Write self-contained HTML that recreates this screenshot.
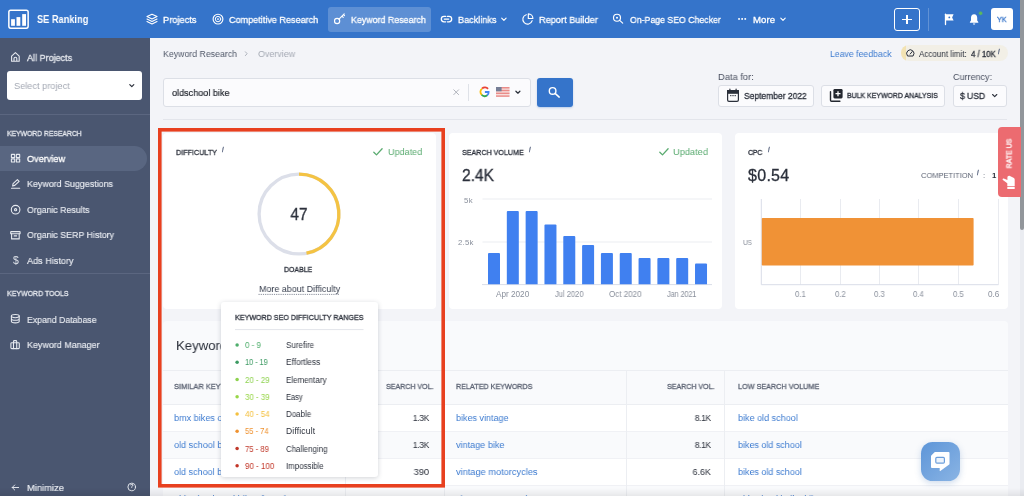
<!DOCTYPE html>
<html lang="en"><head><meta charset="utf-8"><title>SE Ranking – Keyword Research Overview</title>
<style>
*{box-sizing:border-box;margin:0;padding:0}
html,body{width:1024px;height:496px;overflow:hidden;background:#f3f4f8;font-family:"Liberation Sans",sans-serif}
body{position:relative}
.a{position:absolute}
.t{position:absolute;white-space:pre;font-family:"Liberation Sans",sans-serif;will-change:transform}
svg{position:absolute;overflow:visible}
.box{position:absolute;background:#fbfbfd;border:1px solid #dcdfe6;border-radius:3px}
.card{position:absolute;background:#fff;border-radius:4px}
.row{position:absolute;left:163px;width:844.5px}
.vl{position:absolute;width:1px;background:#eceef2;top:370px;height:126px}
</style></head><body>

<!-- top bar -->
<div class="a" style="left:0;top:0;width:1020.25px;height:38px;background:#3574ca"></div>
<div class="a" style="left:327.5px;top:6.5px;width:103.5px;height:25.5px;background:rgba(255,255,255,.2);border-radius:3px"></div>
<!-- logo -->
<svg width="40" height="40" viewBox="0 0 40 40" style="left:0;top:0"><rect x="8.85" y="10.25" width="19.3" height="17.9" rx="1.8" fill="none" stroke="#fff" stroke-width="1.5"/><rect x="11.1" y="19.2" width="3.8" height="6.6" fill="#fff"/><rect x="16.5" y="17.1" width="3.8" height="8.7" fill="#fff"/><rect x="22.2" y="14.1" width="3.8" height="11.7" fill="#fff"/></svg>
<!-- plus button, separator, avatar -->
<div class="a" style="left:894px;top:8px;width:26px;height:22.5px;border:1px solid #fff;border-radius:3px"></div>
<div class="a" style="left:902.3px;top:18.5px;width:9.4px;height:1.4px;background:#fff"></div>
<div class="a" style="left:906.3px;top:14.5px;width:1.4px;height:9.4px;background:#fff"></div>
<div class="a" style="left:927.7px;top:8px;width:1px;height:22.5px;background:rgba(255,255,255,.22)"></div>
<div class="a" style="left:991px;top:8px;width:21.5px;height:22px;background:#fff;border-radius:3px"></div>

<!-- scrollbar -->
<div class="a" style="left:1020.25px;top:0;width:3.75px;height:496px;background:#eaecf1"></div>
<div class="a" style="left:1020.25px;top:0;width:3.75px;height:230px;background:#92969b;border-radius:0 0 2px 2px"></div>

<!-- sidebar -->
<div class="a" style="left:0;top:38px;width:150px;height:458px;background:#4a5670"></div>
<div class="a" style="left:7px;top:70.5px;width:135px;height:29.5px;background:#fff;border-radius:3px"></div>
<div class="a" style="left:0;top:113.5px;width:150px;height:1px;background:#5b6680"></div>
<div class="a" style="left:0;top:145.5px;width:146.5px;height:25.5px;background:#596681;border-radius:0 13px 13px 0"></div>
<div class="a" style="left:0;top:273px;width:150px;height:1px;background:#5b6680"></div>

<!-- search row -->
<div class="box" style="left:163px;top:78px;width:367.5px;height:28.5px"></div>
<div class="a" style="left:468.2px;top:83.5px;width:1px;height:17px;background:#dfe2e8"></div>
<div class="a" style="left:537px;top:77.5px;width:35.5px;height:29.5px;background:#3574ca;border-radius:3px;box-shadow:0 1px 2px rgba(53,116,202,.3)"></div>
<div class="box" style="left:718px;top:84.5px;width:96px;height:22px"></div>
<div class="box" style="left:821px;top:84.5px;width:124px;height:22px"></div>
<div class="box" style="left:952.5px;top:84.5px;width:54.5px;height:22px"></div>
<div class="a" style="left:901px;top:45px;width:106.5px;height:16px;background:#f2efe6;border-radius:8px;overflow:hidden"><div class="a" style="left:0;top:0;width:5px;height:16px;background:#f3e3b3"></div></div>
<div class="a" style="left:163px;top:119px;width:844px;height:1px;background:#e3e5eb"></div>

<!-- cards -->
<div class="card" style="left:163px;top:133px;width:273px;height:175.75px"></div>
<div class="card" style="left:449px;top:133px;width:272.5px;height:175.75px"></div>
<div class="card" style="left:734.5px;top:133px;width:273px;height:175.75px"></div>

<!-- ideas card + table -->
<div class="card" style="left:163px;top:321px;width:844.5px;height:180px;background:#f9fafc"></div>
<div class="row" style="top:369.5px;height:1px;background:#eceef2"></div>
<div class="row" style="top:404px;height:27.25px;background:#fff"></div>
<div class="row" style="top:458.25px;height:27.25px;background:#fff"></div>
<div class="row" style="top:403.5px;height:1px;background:#eceef2"></div>
<div class="row" style="top:431px;height:1px;background:#f0f1f5"></div>
<div class="row" style="top:458px;height:1px;background:#f0f1f5"></div>
<div class="row" style="top:485.2px;height:1px;background:#f0f1f5"></div>
<div class="vl" style="left:345px"></div>
<div class="vl" style="left:443.5px"></div>
<div class="vl" style="left:626.3px"></div>
<div class="vl" style="left:724.3px"></div>

<svg width="1024" height="496" viewBox="0 0 1024 496" style="left:0;top:0" fill="none">
<circle cx="299" cy="214" r="39.9" stroke="#dcdfe9" stroke-width="3.3"/>
<path d="M299 174.1A39.9 39.9 0 0 1 306.48 253.19" stroke="#f4c343" stroke-width="3.3"/>
<line x1="258.5" y1="294.4" x2="339.8" y2="294.4" stroke="#6b7282" stroke-width="0.8" stroke-dasharray="1.2 1"/>
<line x1="482.5" y1="199" x2="712" y2="199" stroke="#e6e8ee" stroke-width="0.8"/>
<line x1="482.5" y1="242" x2="712" y2="242" stroke="#e6e8ee" stroke-width="0.8"/>
<line x1="482" y1="284.6" x2="712" y2="284.6" stroke="#d9dde8" stroke-width="1"/>
<path d="M488.00 284.2V254q0 -1 1 -1h10q1 0 1 1V284.2z" fill="#4080f0"/>
<path d="M506.82 284.2V212q0 -1 1 -1h10q1 0 1 1V284.2z" fill="#4080f0"/>
<path d="M525.64 284.2V212q0 -1 1 -1h10q1 0 1 1V284.2z" fill="#4080f0"/>
<path d="M544.46 284.2V225.5q0 -1 1 -1h10q1 0 1 1V284.2z" fill="#4080f0"/>
<path d="M563.28 284.2V237q0 -1 1 -1h10q1 0 1 1V284.2z" fill="#4080f0"/>
<path d="M582.10 284.2V246q0 -1 1 -1h10q1 0 1 1V284.2z" fill="#4080f0"/>
<path d="M600.92 284.2V254q0 -1 1 -1h10q1 0 1 1V284.2z" fill="#4080f0"/>
<path d="M619.74 284.2V254q0 -1 1 -1h10q1 0 1 1V284.2z" fill="#4080f0"/>
<path d="M638.56 284.2V259q0 -1 1 -1h10q1 0 1 1V284.2z" fill="#4080f0"/>
<path d="M657.38 284.2V259q0 -1 1 -1h10q1 0 1 1V284.2z" fill="#4080f0"/>
<path d="M676.20 284.2V259q0 -1 1 -1h10q1 0 1 1V284.2z" fill="#4080f0"/>
<path d="M695.02 284.2V264.5q0 -1 1 -1h10q1 0 1 1V284.2z" fill="#4080f0"/>
<line x1="800.5" y1="199" x2="800.5" y2="284.7" stroke="#e9ebf0" stroke-width="1"/>
<line x1="840.5" y1="199" x2="840.5" y2="284.7" stroke="#e9ebf0" stroke-width="1"/>
<line x1="879.5" y1="199" x2="879.5" y2="284.7" stroke="#e9ebf0" stroke-width="1"/>
<line x1="918.5" y1="199" x2="918.5" y2="284.7" stroke="#e9ebf0" stroke-width="1"/>
<line x1="958.5" y1="199" x2="958.5" y2="284.7" stroke="#e9ebf0" stroke-width="1"/>
<line x1="998.5" y1="199" x2="998.5" y2="284.7" stroke="#e9ebf0" stroke-width="1"/>
<line x1="761.3" y1="199" x2="761.3" y2="284.7" stroke="#d9dde8" stroke-width="1"/>
<line x1="761.3" y1="284.7" x2="998.5" y2="284.7" stroke="#d9dde8" stroke-width="1"/>
<rect x="761.8" y="218" width="211.8" height="47.5" rx="0.8" fill="#f09236"/>
<path d="M373.8 152.2l2.7 2.7l5.6 -6.2" stroke="#5aab70" stroke-width="1.3" stroke-linecap="round" stroke-linejoin="round"/>
<path d="M659.8 152.2l2.7 2.7l5.6 -6.2" stroke="#5aab70" stroke-width="1.3" stroke-linecap="round" stroke-linejoin="round"/>
<g stroke="#fff" stroke-width="1.15" stroke-linecap="round" stroke-linejoin="round" fill="none">
<!-- layers (Projects) -->
<path d="M152 14.3l5 2.3l-5 2.3l-5 -2.3z"/>
<path d="M147 19.1l5 2.3l5 -2.3"/>
<path d="M147 21.6l5 2.3l5 -2.3"/>
<!-- target (Competitive) -->
<circle cx="218" cy="19.1" r="4.9"/><circle cx="218" cy="19.1" r="2.7" stroke-width="1"/><circle cx="218" cy="19.1" r="0.9" fill="#fff" stroke="none"/>
<!-- key -->
<circle cx="337.1" cy="21" r="2.6"/><path d="M339 19.1l5.2 -5.2M342 16.2l1.2 1.2M343.5 14.7l1 1"/>
<!-- link -->
<path d="M445.6 16.4h-1.6a2.7 2.7 0 0 0 0 5.4h1.6M447.4 16.4h1.6a2.7 2.7 0 0 1 0 5.4h-1.6M444.3 19.1h4.4" stroke-width="1.3"/>
<!-- chevrons -->
<path d="M501.7 18.2l2.2 2.2l2.2 -2.2"/>
<path d="M780.8 18.2l2.2 2.2l2.2 -2.2"/>
<!-- pie (Report Builder) -->
<path d="M526.2 14.7a4.8 4.8 0 1 0 6 6"/><path d="M528.3 13.9v4.6h4.6a4.6 4.6 0 0 0 -4.6 -4.6z"/>
<!-- on-page magnifier -->
<circle cx="617" cy="17.7" r="3.5"/><circle cx="617" cy="17.7" r="1" fill="#fff" stroke="none"/><path d="M619.7 20.4l3 2.7"/>
<!-- flag -->
<path d="M945.5 14.2v10.4" stroke-width="1.3"/>
</g>
<path d="M946 14.2h7.6l-1.5 3.2l1.5 3.2h-7.6z" fill="#fff"/><circle cx="949.3" cy="17.4" r="0.9" fill="#3574ca"/>
<!-- more dots -->
<rect x="738.2" y="18.1" width="1.7" height="1.7" fill="#fff"/><rect x="741.3" y="18.1" width="1.7" height="1.7" fill="#fff"/><rect x="744.4" y="18.1" width="1.7" height="1.7" fill="#fff"/>
<!-- bell -->
<path d="M974.1 14.2c-2.1 0 -3.1 1.6 -3.1 3.6v2.6l-1.1 1.7v0.6h8.4v-0.6l-1.1 -1.7v-2.6c0 -2 -1 -3.6 -3.1 -3.6zM972.9 23.4a1.2 1.2 0 0 0 2.4 0z" fill="#fff"/>
<circle cx="980.6" cy="13.3" r="2" fill="#5cb85c" stroke="#3574ca" stroke-width="0.5"/>

<!-- sidebar icons -->
<g stroke="#e6e9ef" stroke-width="1.1" stroke-linecap="round" stroke-linejoin="round" fill="none">
<path d="M11.6 56.2l3.8 -3.5l3.8 3.5v5h-7.6zM14 61.2v-2.6a1.4 1.4 0 0 1 2.8 0v2.6"/>
<rect x="11.4" y="154.4" width="3.3" height="3.1" rx="0.3"/><rect x="16.4" y="154.4" width="3.3" height="3.1" rx="0.3"/><rect x="11.4" y="158.9" width="3.3" height="3.1" rx="0.3"/><rect x="16.4" y="158.9" width="3.3" height="3.1" rx="0.3"/>
<path d="M12.6 186l0.5 -2.3l4.3 -4.1l1.7 1.7l-4.3 4.1zM11.5 188.3h8.2"/>
<circle cx="15.6" cy="209.7" r="4.3"/><circle cx="15.6" cy="209.7" r="1.1"/>
<rect x="10.7" y="231.6" width="9.4" height="2.2" rx="0.4"/><path d="M11.6 233.9v5h7.6v-5M14.2 235.9h2.4"/>
<ellipse cx="15.3" cy="316.1" rx="3.9" ry="1.6"/><path d="M11.4 316.1v5.2c0 0.9 1.7 1.6 3.9 1.6s3.9 -0.7 3.9 -1.6v-5.2M11.4 318.7c0 0.9 1.7 1.6 3.9 1.6s3.9 -0.7 3.9 -1.6"/>
<rect x="10.9" y="342.8" width="8.4" height="5.8" rx="0.8"/><path d="M13.5 342.8v-1.3a0.9 0.9 0 0 1 0.9 -0.9h1.4a0.9 0.9 0 0 1 0.9 0.9v1.3M13.5 342.8v5.8M16.7 342.8v5.8"/>
<path d="M18.6 487.5h-6.4M14.7 485l-2.5 2.5l2.5 2.5" stroke-width="0.95"/>
<circle cx="131.7" cy="487" r="3.8" stroke-width="0.95"/>
</g>
<!-- select chevron -->
<path d="M129.8 84.6l2 2l2 -2" stroke="#2b303b" stroke-width="1.2" stroke-linecap="round" stroke-linejoin="round"/>
<!-- breadcrumb chevron -->
<path d="M245.4 51.8l1.7 1.9l-1.7 1.9" stroke="#a5aab4" stroke-width="0.9" stroke-linecap="round" stroke-linejoin="round"/>

<!-- search input icons -->
<path d="M453.8 89.8l4.8 4.8M458.6 89.8l-4.8 4.8" stroke="#a3a7b0" stroke-width="0.85" stroke-linecap="round"/>
<!-- google G -->
<g fill="none" stroke-width="1.8">
<path d="M488 88.9a3.9 3.9 0 0 0 -5.9 -0.4" stroke="#ea4335"/>
<path d="M482 88.7a3.9 3.9 0 0 0 -0.1 6.2" stroke="#fbbc05"/>
<path d="M481.7 94.7a3.9 3.9 0 0 0 5.8 0.5" stroke="#34a853"/>
<path d="M487.2 95.4a4 4 0 0 0 1.4 -3.4h-3.7" stroke="#4285f4"/>
</g>
<!-- us flag -->
<g>
<rect x="496" y="87" width="13.5" height="9.8" rx="1" fill="#f7dedc"/>
<rect x="496" y="87" width="13.5" height="1.5" fill="#ea8c89"/><rect x="496" y="89.8" width="13.5" height="1.4" fill="#ea8c89"/><rect x="496" y="92.6" width="13.5" height="1.4" fill="#ea8c89"/><rect x="496" y="95.4" width="13.5" height="1.4" fill="#ea8c89"/>
<rect x="496" y="87" width="5.6" height="4.3" fill="#767e96"/>
</g>
<path d="M515.9 91.2l2 2l2 -2" stroke="#2b303b" stroke-width="1.25" stroke-linecap="round" stroke-linejoin="round"/>
<!-- search button magnifier -->
<circle cx="552.6" cy="90.9" r="3.3" stroke="#fff" stroke-width="1.4"/><path d="M555.1 93.4l4.1 3.7" stroke="#fff" stroke-width="1.5" stroke-linecap="round"/>
<!-- calendar -->
<rect x="727.6" y="90.6" width="10.8" height="10.8" rx="1.4" stroke="#2b303b" stroke-width="1.2"/>
<path d="M727.6 90.6h10.8v2.6h-10.8zM729.9 89v2.6M736.1 89v2.6" stroke="#2b303b" stroke-width="1.2" fill="#2b303b" stroke-linecap="round"/>
<rect x="730.2" y="95" width="1.2" height="1.2" fill="#2b303b"/><rect x="732.4" y="95" width="1.2" height="1.2" fill="#2b303b"/><rect x="734.6" y="95" width="1.2" height="1.2" fill="#2b303b"/>
<!-- bulk icon -->
<rect x="833.4" y="89" width="9.2" height="9.4" rx="1.3" fill="#23272f"/>
<path d="M838 91.2v5M835.5 93.7h5" stroke="#fff" stroke-width="1.3"/>
<path d="M830.5 91.8v8.4a1 1 0 0 0 1 1h8.4" stroke="#23272f" stroke-width="1.4" stroke-linecap="round"/>
<!-- usd chevron -->
<path d="M992.6 94.5l2.1 2.1l2.1 -2.1" stroke="#2b303b" stroke-width="1.1" stroke-linecap="round" stroke-linejoin="round"/>
<!-- account limit gauge -->
<path d="M907.3 55.7a3.7 3.7 0 1 1 6 0zM910.2 54l2 -2.4" stroke="#2b303b" stroke-width="1" stroke-linecap="round" stroke-linejoin="round"/>

</svg>

<span class="t" style="top:12.60px;font-size:10.2px;line-height:14px;color:#ffffff;font-weight:700;left:37.00px;transform:scaleX(0.9053);transform-origin:0 50%;">SE Ranking</span>
<span class="t" style="top:12.50px;font-size:9.6px;line-height:14px;color:#ffffff;left:163.00px;transform:scaleX(0.9666);transform-origin:0 50%;-webkit-text-stroke:0.3px #ffffff;">Projects</span>
<span class="t" style="top:12.50px;font-size:9.6px;line-height:14px;color:#ffffff;left:228.75px;transform:scaleX(0.9455);transform-origin:0 50%;-webkit-text-stroke:0.3px #ffffff;">Competitive Research</span>
<span class="t" style="top:12.50px;font-size:9.6px;line-height:14px;color:#ffffff;left:350.50px;transform:scaleX(0.9221);transform-origin:0 50%;-webkit-text-stroke:0.3px #ffffff;">Keyword Research</span>
<span class="t" style="top:12.50px;font-size:9.6px;line-height:14px;color:#ffffff;left:457.50px;transform:scaleX(0.9499);transform-origin:0 50%;-webkit-text-stroke:0.3px #ffffff;">Backlinks</span>
<span class="t" style="top:12.50px;font-size:9.6px;line-height:14px;color:#ffffff;left:538.75px;transform:scaleX(0.9580);transform-origin:0 50%;-webkit-text-stroke:0.3px #ffffff;">Report Builder</span>
<span class="t" style="top:12.50px;font-size:9.6px;line-height:14px;color:#ffffff;left:630.00px;transform:scaleX(0.9101);transform-origin:0 50%;-webkit-text-stroke:0.3px #ffffff;">On-Page SEO Checker</span>
<span class="t" style="top:12.50px;font-size:9.6px;line-height:14px;color:#ffffff;letter-spacing:0.098px;left:753.25px;-webkit-text-stroke:0.3px #ffffff;">More</span>
<span class="t" style="top:14.20px;font-size:7.8px;line-height:11px;color:#3574ca;left:997.30px;transform:scaleX(0.9129);transform-origin:0 50%;-webkit-text-stroke:0.3px #3574ca;">YK</span>
<span class="t" style="top:51.10px;font-size:9.5px;line-height:13px;color:#e6e9ef;left:27.20px;transform:scaleX(0.9513);transform-origin:0 50%;-webkit-text-stroke:0.3px #e6e9ef;">All Projects</span>
<span class="t" style="top:78.50px;font-size:9.6px;line-height:14px;color:#a3a8b3;left:13.50px;transform:scaleX(0.9591);transform-origin:0 50%;">Select project</span>
<span class="t" style="top:127.70px;font-size:7.7px;line-height:11px;color:#e6e9ef;letter-spacing:-0.113px;left:7.00px;transform:scaleX(0.9000);transform-origin:0 50%;-webkit-text-stroke:0.3px #e6e9ef;">KEYWORD RESEARCH</span>
<span class="t" style="top:151.50px;font-size:9.7px;line-height:14px;color:#ffffff;left:27.00px;transform:scaleX(0.9412);transform-origin:0 50%;-webkit-text-stroke:0.3px #ffffff;">Overview</span>
<span class="t" style="top:177.00px;font-size:9.7px;line-height:14px;color:#e6e9ef;left:27.00px;transform:scaleX(0.9178);transform-origin:0 50%;-webkit-text-stroke:0.18px #e6e9ef;">Keyword Suggestions</span>
<span class="t" style="top:202.75px;font-size:9.7px;line-height:14px;color:#e6e9ef;left:27.00px;transform:scaleX(0.9068);transform-origin:0 50%;-webkit-text-stroke:0.18px #e6e9ef;">Organic Results</span>
<span class="t" style="top:228.00px;font-size:9.7px;line-height:14px;color:#e6e9ef;left:27.00px;transform:scaleX(0.9095);transform-origin:0 50%;-webkit-text-stroke:0.18px #e6e9ef;">Organic SERP History</span>
<span class="t" style="top:253.50px;font-size:9.7px;line-height:14px;color:#e6e9ef;left:27.00px;transform:scaleX(0.9388);transform-origin:0 50%;-webkit-text-stroke:0.18px #e6e9ef;">Ads History</span>
<span class="t" style="top:288.00px;font-size:7.7px;line-height:11px;color:#e6e9ef;left:7.00px;transform:scaleX(0.9092);transform-origin:0 50%;-webkit-text-stroke:0.3px #e6e9ef;">KEYWORD TOOLS</span>
<span class="t" style="top:312.50px;font-size:9.7px;line-height:14px;color:#e6e9ef;left:27.00px;transform:scaleX(0.9022);transform-origin:0 50%;-webkit-text-stroke:0.18px #e6e9ef;">Expand Database</span>
<span class="t" style="top:337.75px;font-size:9.7px;line-height:14px;color:#e6e9ef;left:27.00px;transform:scaleX(0.9221);transform-origin:0 50%;-webkit-text-stroke:0.18px #e6e9ef;">Keyword Manager</span>
<span class="t" style="top:480.75px;font-size:9.7px;line-height:14px;color:#e6e9ef;left:27.00px;transform:scaleX(0.9681);transform-origin:0 50%;-webkit-text-stroke:0.18px #e6e9ef;">Minimize</span>
<span class="t" style="top:46.75px;font-size:9.6px;line-height:14px;color:#505869;left:163.00px;transform:scaleX(0.9129);transform-origin:0 50%;">Keyword Research</span>
<span class="t" style="top:46.75px;font-size:9.6px;line-height:14px;color:#a5aab4;left:258.00px;transform:scaleX(0.9316);transform-origin:0 50%;">Overview</span>
<span class="t" style="top:47.00px;font-size:9.6px;line-height:14px;color:#3d7bd0;left:829.50px;transform:scaleX(0.9077);transform-origin:0 50%;">Leave feedback</span>
<span class="t" style="top:47.80px;font-size:8.4px;line-height:12px;color:#2b303b;left:919.30px;transform:scaleX(0.9576);transform-origin:0 50%;">Account limit:</span>
<span class="t" style="top:47.80px;font-size:8.4px;line-height:12px;color:#2b303b;left:971.20px;transform:scaleX(0.9304);transform-origin:0 50%;-webkit-text-stroke:0.3px #2b303b;">4 / 10K</span>
<span class="t" style="top:46.50px;font-size:6.9px;line-height:10px;color:#5f6a84;left:997.50px;font-style:italic;-webkit-text-stroke:0.3px #5f6a84;">i</span>
<span class="t" style="top:86.00px;font-size:9.6px;line-height:14px;color:#23272f;left:172.00px;transform:scaleX(0.9455);transform-origin:0 50%;-webkit-text-stroke:0.18px #23272f;">oldschool bike</span>
<span class="t" style="top:69.50px;font-size:9.6px;line-height:14px;color:#4a5060;left:717.75px;transform:scaleX(0.9715);transform-origin:0 50%;">Data for:</span>
<span class="t" style="top:69.50px;font-size:9.6px;line-height:14px;color:#4a5060;left:952.50px;transform:scaleX(0.9376);transform-origin:0 50%;">Currency:</span>
<span class="t" style="top:89.10px;font-size:9.4px;line-height:13px;color:#2b303b;left:743.90px;transform:scaleX(0.9044);transform-origin:0 50%;-webkit-text-stroke:0.3px #2b303b;">September 2022</span>
<span class="t" style="top:90.10px;font-size:7.2px;line-height:11px;color:#2b303b;left:847.25px;transform:scaleX(0.9650);transform-origin:0 50%;-webkit-text-stroke:0.3px #2b303b;">BULK KEYWORD ANALYSIS</span>
<span class="t" style="top:88.50px;font-size:9.6px;line-height:14px;color:#2b303b;letter-spacing:-0.098px;left:960.00px;transform:scaleX(0.9000);transform-origin:0 50%;-webkit-text-stroke:0.3px #2b303b;">$ USD</span>
<span class="t" style="top:146.80px;font-size:7.9px;line-height:11px;color:#2b303b;left:175.50px;transform:scaleX(0.9108);transform-origin:0 50%;-webkit-text-stroke:0.3px #2b303b;">DIFFICULTY</span>
<span class="t" style="top:144.60px;font-size:6.9px;line-height:10px;color:#5f6a84;left:222.20px;font-style:italic;-webkit-text-stroke:0.3px #5f6a84;">i</span>
<span class="t" style="top:145.00px;font-size:9.6px;line-height:14px;color:#5aab70;left:387.75px;transform:scaleX(0.9440);transform-origin:0 50%;">Updated</span>
<span class="t" style="top:204.40px;font-size:15.6px;line-height:21px;color:#2b303b;left:148.80px;width:300px;text-align:center;text-indent:0.00px;transform:scaleX(0.9793);transform-origin:50% 50%;-webkit-text-stroke:0.3px #2b303b;">47</span>
<span class="t" style="top:264.25px;font-size:7.7px;line-height:11px;color:#2b303b;left:284.00px;transform:scaleX(0.9054);transform-origin:0 50%;-webkit-text-stroke:0.3px #2b303b;">DOABLE</span>
<span class="t" style="top:282.25px;font-size:9.6px;line-height:14px;color:#3a4150;left:258.50px;transform:scaleX(0.9309);transform-origin:0 50%;">More about Difficulty</span>
<span class="t" style="top:146.80px;font-size:7.9px;line-height:11px;color:#2b303b;left:461.50px;transform:scaleX(0.9027);transform-origin:0 50%;-webkit-text-stroke:0.3px #2b303b;">SEARCH VOLUME</span>
<span class="t" style="top:144.60px;font-size:6.9px;line-height:10px;color:#5f6a84;left:529.20px;font-style:italic;-webkit-text-stroke:0.3px #5f6a84;">i</span>
<span class="t" style="top:145.00px;font-size:9.6px;line-height:14px;color:#5aab70;left:673.00px;transform:scaleX(0.9647);transform-origin:0 50%;">Updated</span>
<span class="t" style="top:165.10px;font-size:16px;line-height:21px;color:#2b303b;left:461.50px;transform:scaleX(0.9720);transform-origin:0 50%;-webkit-text-stroke:0.3px #2b303b;">2.4K</span>
<span class="t" style="top:194.80px;font-size:7.8px;line-height:11px;color:#8a909c;letter-spacing:0.375px;right:550.62px;">5k</span>
<span class="t" style="top:237.40px;font-size:7.8px;line-height:11px;color:#8a909c;letter-spacing:0.188px;right:550.81px;">2.5k</span>
<span class="t" style="top:289.10px;font-size:8.2px;line-height:12px;color:#8a909c;left:496.30px;transform:scaleX(0.9929);transform-origin:0 50%;">Apr 2020</span>
<span class="t" style="top:289.10px;font-size:8.2px;line-height:12px;color:#8a909c;left:554.50px;transform:scaleX(0.9203);transform-origin:0 50%;">Jul 2020</span>
<span class="t" style="top:289.10px;font-size:8.2px;line-height:12px;color:#8a909c;left:609.00px;transform:scaleX(0.9779);transform-origin:0 50%;">Oct 2020</span>
<span class="t" style="top:289.10px;font-size:8.2px;line-height:12px;color:#8a909c;letter-spacing:-0.150px;left:667.00px;transform:scaleX(0.9000);transform-origin:0 50%;">Jan 2021</span>
<span class="t" style="top:146.80px;font-size:7.9px;line-height:11px;color:#2b303b;letter-spacing:-0.372px;left:747.50px;transform:scaleX(0.9000);transform-origin:0 50%;-webkit-text-stroke:0.3px #2b303b;">CPC</span>
<span class="t" style="top:144.60px;font-size:6.9px;line-height:10px;color:#5f6a84;left:768.20px;font-style:italic;-webkit-text-stroke:0.3px #5f6a84;">i</span>
<span class="t" style="top:164.90px;font-size:16px;line-height:21px;color:#2b303b;letter-spacing:0.291px;left:747.50px;-webkit-text-stroke:0.3px #2b303b;">$0.54</span>
<span class="t" style="top:170.25px;font-size:7.8px;line-height:11px;color:#5b6272;left:921.00px;transform:scaleX(0.9602);transform-origin:0 50%;">COMPETITION</span>
<span class="t" style="top:167.70px;font-size:6.9px;line-height:10px;color:#5f6a84;left:977.20px;font-style:italic;-webkit-text-stroke:0.3px #5f6a84;">i</span>
<span class="t" style="top:170.00px;font-size:7.8px;line-height:11px;color:#5b6272;left:982.80px;">:</span>
<span class="t" style="top:170.25px;font-size:7.8px;line-height:11px;color:#2b303b;font-weight:700;left:991.70px;">1</span>
<span class="t" style="top:237.10px;font-size:7.4px;line-height:11px;color:#8a909c;letter-spacing:-0.252px;left:743.40px;transform:scaleX(0.9000);transform-origin:0 50%;">US</span>
<span class="t" style="top:289.00px;font-size:8.2px;line-height:12px;color:#8a909c;left:795.40px;transform:scaleX(0.9481);transform-origin:0 50%;">0.1</span>
<span class="t" style="top:289.00px;font-size:8.2px;line-height:12px;color:#8a909c;left:835.10px;transform:scaleX(0.9481);transform-origin:0 50%;">0.2</span>
<span class="t" style="top:289.00px;font-size:8.2px;line-height:12px;color:#8a909c;left:874.30px;transform:scaleX(0.9481);transform-origin:0 50%;">0.3</span>
<span class="t" style="top:289.00px;font-size:8.2px;line-height:12px;color:#8a909c;left:913.40px;transform:scaleX(0.9481);transform-origin:0 50%;">0.4</span>
<span class="t" style="top:289.00px;font-size:8.2px;line-height:12px;color:#8a909c;left:952.90px;transform:scaleX(0.9481);transform-origin:0 50%;">0.5</span>
<span class="t" style="top:289.00px;font-size:8.2px;line-height:12px;color:#8a909c;left:987.50px;transform:scaleX(0.9657);transform-origin:0 50%;">0.6</span>
<span class="t" style="top:337.00px;font-size:13.6px;line-height:18px;color:#2b303b;left:175.75px;transform:scaleX(0.9672);transform-origin:0 50%;">Keyword ideas</span>
<span class="t" style="top:381.00px;font-size:7.6px;line-height:11px;color:#5b6272;left:174.25px;transform:scaleX(0.9799);transform-origin:0 50%;-webkit-text-stroke:0.3px #5b6272;">SIMILAR KEYWORDS</span>
<span class="t" style="top:381.00px;font-size:7.6px;line-height:11px;color:#5b6272;left:385.50px;transform:scaleX(0.9302);transform-origin:0 50%;-webkit-text-stroke:0.3px #5b6272;">SEARCH VOL.</span>
<span class="t" style="top:381.00px;font-size:7.6px;line-height:11px;color:#5b6272;left:455.50px;transform:scaleX(0.9459);transform-origin:0 50%;-webkit-text-stroke:0.3px #5b6272;">RELATED KEYWORDS</span>
<span class="t" style="top:381.00px;font-size:7.6px;line-height:11px;color:#5b6272;left:667.00px;transform:scaleX(0.9302);transform-origin:0 50%;-webkit-text-stroke:0.3px #5b6272;">SEARCH VOL.</span>
<span class="t" style="top:381.00px;font-size:7.6px;line-height:11px;color:#5b6272;left:737.50px;transform:scaleX(0.9533);transform-origin:0 50%;-webkit-text-stroke:0.3px #5b6272;">LOW SEARCH VOLUME</span>
<span class="t" style="top:410.75px;font-size:9.7px;line-height:14px;color:#3d7bd0;left:174.25px;transform:scaleX(0.9369);transform-origin:0 50%;">bmx bikes old school</span>
<span class="t" style="top:410.75px;font-size:9.7px;line-height:14px;color:#2b303b;letter-spacing:-0.512px;right:595.11px;transform:scaleX(0.9000);transform-origin:100% 50%;">1.3K</span>
<span class="t" style="top:410.75px;font-size:9.7px;line-height:14px;color:#3d7bd0;left:455.50px;transform:scaleX(0.9284);transform-origin:0 50%;">bikes vintage</span>
<span class="t" style="top:410.75px;font-size:9.7px;line-height:14px;color:#2b303b;letter-spacing:-0.568px;right:313.37px;transform:scaleX(0.9000);transform-origin:100% 50%;">8.1K</span>
<span class="t" style="top:410.75px;font-size:9.7px;line-height:14px;color:#3d7bd0;left:737.50px;transform:scaleX(0.9322);transform-origin:0 50%;">bike old school</span>
<span class="t" style="top:437.75px;font-size:9.7px;line-height:14px;color:#3d7bd0;left:174.25px;transform:scaleX(0.9369);transform-origin:0 50%;">old school bmx bikes</span>
<span class="t" style="top:437.75px;font-size:9.7px;line-height:14px;color:#2b303b;letter-spacing:-0.512px;right:595.11px;transform:scaleX(0.9000);transform-origin:100% 50%;">1.3K</span>
<span class="t" style="top:437.75px;font-size:9.7px;line-height:14px;color:#3d7bd0;left:455.50px;transform:scaleX(0.9380);transform-origin:0 50%;">vintage bike</span>
<span class="t" style="top:437.75px;font-size:9.7px;line-height:14px;color:#2b303b;letter-spacing:-0.568px;right:313.37px;transform:scaleX(0.9000);transform-origin:100% 50%;">8.1K</span>
<span class="t" style="top:437.75px;font-size:9.7px;line-height:14px;color:#3d7bd0;left:737.50px;transform:scaleX(0.9248);transform-origin:0 50%;">bikes old school</span>
<span class="t" style="top:464.60px;font-size:9.7px;line-height:14px;color:#3d7bd0;left:174.25px;transform:scaleX(0.9322);transform-origin:0 50%;">old school bike</span>
<span class="t" style="top:464.60px;font-size:9.7px;line-height:14px;color:#2b303b;right:594.60px;transform:scaleX(0.9646);transform-origin:100% 50%;">390</span>
<span class="t" style="top:464.60px;font-size:9.7px;line-height:14px;color:#3d7bd0;left:455.50px;transform:scaleX(0.9520);transform-origin:0 50%;">vintage motorcycles</span>
<span class="t" style="top:464.60px;font-size:9.7px;line-height:14px;color:#2b303b;right:312.80px;transform:scaleX(0.9229);transform-origin:100% 50%;">6.6K</span>
<span class="t" style="top:464.60px;font-size:9.7px;line-height:14px;color:#3d7bd0;left:737.50px;transform:scaleX(0.9248);transform-origin:0 50%;">bikes old school</span>
<span class="t" style="top:491.60px;font-size:9.7px;line-height:14px;color:#3d7bd0;left:174.25px;transform:scaleX(0.9304);transform-origin:0 50%;">old school road bikes for sale</span>
<span class="t" style="top:491.60px;font-size:9.7px;line-height:14px;color:#2b303b;right:594.60px;transform:scaleX(0.9646);transform-origin:100% 50%;">390</span>
<span class="t" style="top:491.60px;font-size:9.7px;line-height:14px;color:#3d7bd0;left:455.50px;transform:scaleX(0.9472);transform-origin:0 50%;">vintage motorcycle</span>
<span class="t" style="top:491.60px;font-size:9.7px;line-height:14px;color:#2b303b;right:312.80px;transform:scaleX(0.9229);transform-origin:100% 50%;">6.6K</span>
<span class="t" style="top:491.60px;font-size:9.7px;line-height:14px;color:#3d7bd0;left:737.50px;transform:scaleX(0.9173);transform-origin:0 50%;">old school bullet bike</span>
<span class="t" style="top:253.70px;font-size:10.4px;line-height:14px;color:#dfe3ea;left:12.60px;">$</span>
<span class="t" style="top:482.20px;font-size:6px;line-height:9px;color:#e6e9ef;font-weight:700;left:129.95px;">?</span>

<!-- tooltip -->
<div class="a" style="left:220.5px;top:302px;width:157.5px;height:175px;background:#fff;border-radius:3px;box-shadow:0 1px 5px rgba(40,50,70,.22)"></div>
<!-- red highlight frame -->
<svg width="1024" height="496" viewBox="0 0 1024 496" style="left:0;top:0"><rect x="159.8" y="129.8" width="283.4" height="356" fill="none" stroke="#e8401f" stroke-width="3.6"/></svg>
<!-- rate us tab -->
<div class="a" style="left:997.5px;top:126.5px;width:23px;height:70px;background:#ec6b70;border-radius:4px 0 0 4px"></div>
<!-- chat button -->
<div class="a" style="left:921px;top:442px;width:39px;height:38.5px;border-radius:11.5px;background:linear-gradient(135deg,#5d95d8,#8ab4e4);box-shadow:0 2px 6px rgba(60,110,180,.25)"></div>
<svg width="1024" height="496" viewBox="0 0 1024 496" style="left:0;top:0" fill="none">
<line x1="235" y1="329.6" x2="363.5" y2="329.6" stroke="#e3e5eb" stroke-width="1"/>
<circle cx="237.1" cy="345.00" r="1.75" fill="#4fae6c"/>
<circle cx="237.1" cy="362.25" r="1.75" fill="#3c9a62"/>
<circle cx="237.1" cy="379.50" r="1.75" fill="#8ed24f"/>
<circle cx="237.1" cy="396.75" r="1.75" fill="#98d648"/>
<circle cx="237.1" cy="414.00" r="1.75" fill="#f4c03f"/>
<circle cx="237.1" cy="431.25" r="1.75" fill="#ef9230"/>
<circle cx="237.1" cy="448.50" r="1.75" fill="#c0392b"/>
<circle cx="237.1" cy="465.75" r="1.75" fill="#c23527"/>
<!-- rate us hand -->
<g fill="#fff">
<rect x="1007.3" y="186.7" width="7.4" height="2.2" rx="0.2"/>
<path d="M1007.3 185.9v-2.7l-4.4 -3.1c-0.8 -0.6 -0.1 -1.9 0.9 -1.5l3.6 1.5v-2.6c0 -1.3 1.3 -2.1 2.5 -1.5l3.6 1.7c0.8 0.4 1.2 1.1 1.2 1.9v6.3z"/>
</g>
<!-- chat icon -->
<path d="M935.2 452h13.4a0.9 0.9 0 0 1 0.9 0.9v10.8a1 1 0 0 1 -0.3 0.7l-8.9 6.7c-0.3 0.2 -0.6 0 -0.6 -0.3v-2.8h-7.8a0.9 0.9 0 0 1 -0.9 -0.9v-10.9a1 1 0 0 1 0.3 -0.7l3.2 -3.2a1 1 0 0 1 0.7 -0.3z" fill="#fff"/>
<rect x="935.8" y="457.3" width="8.6" height="5.8" rx="1.1" fill="#eef4fb" stroke="#6c9fdc" stroke-width="1.2"/>

</svg>
<span class="t" style="top:311.50px;font-size:7.6px;line-height:11px;color:#2b303b;left:235.00px;transform:scaleX(0.9389);transform-origin:0 50%;-webkit-text-stroke:0.3px #2b303b;">KEYWORD SEO DIFFICULTY RANGES</span>
<span class="t" style="top:339.00px;font-size:8.5px;line-height:12px;color:#4fae6c;left:245.40px;transform:scaleX(0.9403);transform-origin:0 50%;">0 - 9</span>
<span class="t" style="top:339.00px;font-size:8.5px;line-height:12px;color:#2b303b;left:286.10px;transform:scaleX(0.9440);transform-origin:0 50%;">Surefire</span>
<span class="t" style="top:356.25px;font-size:8.5px;line-height:12px;color:#3c9a62;letter-spacing:-0.194px;left:245.40px;transform:scaleX(0.9000);transform-origin:0 50%;">10 - 19</span>
<span class="t" style="top:356.25px;font-size:8.5px;line-height:12px;color:#2b303b;left:286.10px;transform:scaleX(0.9722);transform-origin:0 50%;">Effortless</span>
<span class="t" style="top:373.50px;font-size:8.5px;line-height:12px;color:#8ed24f;left:245.40px;transform:scaleX(0.9294);transform-origin:0 50%;">20 - 29</span>
<span class="t" style="top:373.50px;font-size:8.5px;line-height:12px;color:#2b303b;left:286.10px;transform:scaleX(0.9419);transform-origin:0 50%;">Elementary</span>
<span class="t" style="top:390.75px;font-size:8.5px;line-height:12px;color:#98d648;left:245.40px;transform:scaleX(0.9294);transform-origin:0 50%;">30 - 39</span>
<span class="t" style="top:390.75px;font-size:8.5px;line-height:12px;color:#2b303b;letter-spacing:-0.171px;left:286.10px;transform:scaleX(0.9000);transform-origin:0 50%;">Easy</span>
<span class="t" style="top:408.00px;font-size:8.5px;line-height:12px;color:#f4c03f;left:245.40px;transform:scaleX(0.9294);transform-origin:0 50%;">40 - 54</span>
<span class="t" style="top:408.00px;font-size:8.5px;line-height:12px;color:#2b303b;left:286.10px;transform:scaleX(0.9355);transform-origin:0 50%;">Doable</span>
<span class="t" style="top:425.25px;font-size:8.5px;line-height:12px;color:#ef9230;letter-spacing:-0.051px;left:245.40px;transform:scaleX(0.9000);transform-origin:0 50%;">55 - 74</span>
<span class="t" style="top:425.25px;font-size:8.5px;line-height:12px;color:#2b303b;letter-spacing:0.176px;left:286.10px;">Difficult</span>
<span class="t" style="top:442.50px;font-size:8.5px;line-height:12px;color:#c0392b;left:245.40px;transform:scaleX(0.9030);transform-origin:0 50%;">75 - 89</span>
<span class="t" style="top:442.50px;font-size:8.5px;line-height:12px;color:#2b303b;left:286.10px;transform:scaleX(0.9219);transform-origin:0 50%;">Challenging</span>
<span class="t" style="top:459.75px;font-size:8.5px;line-height:12px;color:#c23527;left:245.40px;transform:scaleX(0.9390);transform-origin:0 50%;">90 - 100</span>
<span class="t" style="top:459.75px;font-size:8.5px;line-height:12px;color:#2b303b;left:286.10px;transform:scaleX(0.9252);transform-origin:0 50%;">Impossible</span>
<span class="t" style="top:148.25px;font-size:7.4px;line-height:11px;color:#ffffff;left:859.25px;width:300px;text-align:center;text-indent:0.00px;transform:rotate(-90deg) scaleX(0.9370);transform-origin:50% 50%;-webkit-text-stroke:0.3px #ffffff;">RATE US</span>
<!-- bottom shade -->
<div class="a" style="left:0;top:488px;width:1024px;height:8px;background:linear-gradient(rgba(0,0,0,0),rgba(0,0,0,.07))"></div>

</body></html>
